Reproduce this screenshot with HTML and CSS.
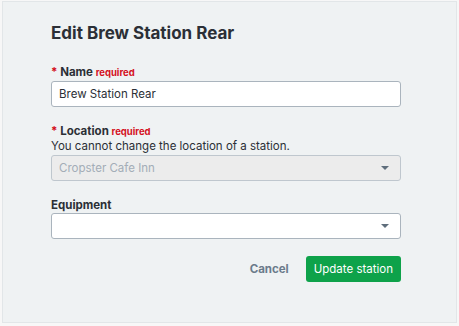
FILE: index.html
```html
<!DOCTYPE html>
<html lang="en">
<head>
    <meta charset="UTF-8">
    <meta name="viewport" content="width=device-width, initial-scale=1.0">
    <title>Edit Brew Station Rear</title>
    <link rel="stylesheet" href="styles.css">
</head>
<body>
    <div class="panel">
        <h1>Edit Brew Station Rear</h1>
        <div class="form-group">
            <label for="name"><span class="star">*</span> Name <span class="req">required</span></label>
            <input type="text" id="name" value="Brew Station Rear">
        </div>
        <div class="form-group">
            <label for="location"><span class="star">*</span> Location <span class="req">required</span></label>
            <div class="help">You cannot change the location of a station.</div>
            <div class="select disabled" id="location">
                <span>Cropster Cafe Inn</span>
                <span class="caret"></span>
            </div>
        </div>
        <div class="form-group">
            <label for="equipment">Equipment</label>
            <div class="select" id="equipment">
                <span></span>
                <span class="caret"></span>
            </div>
        </div>
        <div class="actions">
            <button class="btn-link">Cancel</button>
            <button class="btn-primary">Update station</button>
        </div>
    </div>
</body>
</html>
```

FILE: styles.css
```css
:root {
    --panel-bg: #eff2f3;
    --panel-border: #e2e6e8;
    --text-color: #2b2f36;
    --input-border: #aab4bd;
    --red: #d4111e;
    --green: #0ea24a;
    --muted: #6b7b8b;
}
body {
    margin: 0;
    padding: 1px 2px;
    background: #f7f7f7;
    font-family: Inter, 'Liberation Sans', sans-serif;
    color: var(--text-color);
}
.panel {
    box-sizing: border-box;
    height: 322px;
    background: var(--panel-bg);
    border: 1px solid var(--panel-border);
    padding: 20px 55px 0 48px;
}
h1 {
    margin: 0 0 20px;
    font-size: 17px;
    line-height: 22px;
    font-weight: 700;
}
.form-group {
    margin-bottom: 16px;
}
.form-group:last-of-type label {
    margin-top: 1px;
    margin-bottom: -1px;
}
label {
    display: block;
    font-size: 11.5px;
    line-height: 16px;
    font-weight: 700;
}
.star {
    color: var(--red);
}
.req {
    color: var(--red);
    font-size: 9.5px;
}
.help {
    font-size: 11.5px;
    line-height: 16px;
    margin-top: -2px;
    margin-bottom: 1px;
}
input[type="text"], .select {
    box-sizing: border-box;
    display: flex;
    align-items: center;
    justify-content: space-between;
    width: 100%;
    height: 26px;
    padding: 0 7px;
    border: 1px solid var(--input-border);
    border-radius: 3px;
    background: #fff;
    font-family: inherit;
    font-size: 11.5px;
    color: var(--text-color);
}
.select.disabled {
    background: #ececec;
    border-color: #bfc7ce;
    color: #a3adb7;
}
.caret {
    width: 0;
    height: 0;
    margin-right: 4px;
    border-left: 4px solid transparent;
    border-right: 4px solid transparent;
    border-top: 4px solid #5f6e7c;
}
.actions {
    display: flex;
    justify-content: flex-end;
    align-items: center;
    gap: 17px;
    margin-top: 17px;
}
button {
    font-family: inherit;
    font-size: 11.5px;
    border: none;
    border-radius: 3px;
    cursor: pointer;
}
.btn-link {
    background: none;
    color: var(--muted);
    font-weight: 700;
    padding: 0;
}
.btn-primary {
    background: var(--green);
    color: #fff;
    height: 26px;
    padding: 0 8px;
}
```
